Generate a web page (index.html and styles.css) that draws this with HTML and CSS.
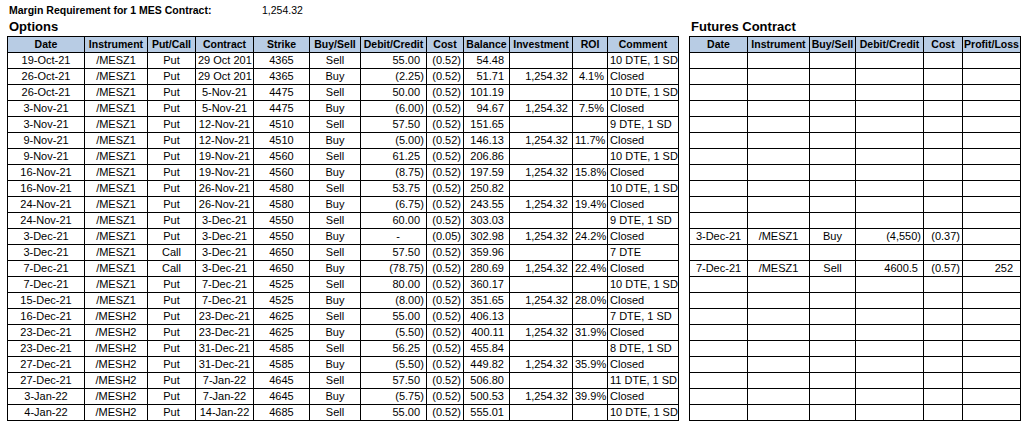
FILE: index.html
```html
<!DOCTYPE html>
<html>
<head>
<meta charset="utf-8">
<link rel="stylesheet" href="styles.css">
</head>
<body>
<div class="page">
  <section class="sheet">
    <div class="topline"><span class="label">Margin Requirement for 1 MES Contract:</span><span class="value">1,254.32</span></div>
    <h2 class="title">Options</h2>
    <table class="grid opt">
      <colgroup>
        <col class="w77"><col class="w63"><col class="w48"><col class="w58"><col class="w56"><col class="w51"><col class="w66"><col class="w37"><col class="w46"><col class="w63"><col class="w35"><col class="w71">
      </colgroup>
      <thead>
        <tr><th>Date</th><th>Instrument</th><th>Put/Call</th><th>Contract</th><th>Strike</th><th>Buy/Sell</th><th>Debit/Credit</th><th>Cost</th><th>Balance</th><th>Investment</th><th>ROI</th><th>Comment</th></tr>
      </thead>
      <tbody>
        <tr><td>19-Oct-21</td><td>/MESZ1</td><td>Put</td><td>29 Oct 201</td><td>4365</td><td>Sell</td><td>55.00</td><td>(0.52)</td><td>54.48</td><td></td><td></td><td>10 DTE, 1 SD</td></tr>
        <tr><td>26-Oct-21</td><td>/MESZ1</td><td>Put</td><td>29 Oct 201</td><td>4365</td><td>Buy</td><td class="n">(2.25)</td><td>(0.52)</td><td>51.71</td><td>1,254.32</td><td>4.1%</td><td>Closed</td></tr>
        <tr><td>26-Oct-21</td><td>/MESZ1</td><td>Put</td><td>5-Nov-21</td><td>4475</td><td>Sell</td><td>50.00</td><td>(0.52)</td><td>101.19</td><td></td><td></td><td>10 DTE, 1 SD</td></tr>
        <tr><td>3-Nov-21</td><td>/MESZ1</td><td>Put</td><td>5-Nov-21</td><td>4475</td><td>Buy</td><td class="n">(6.00)</td><td>(0.52)</td><td>94.67</td><td>1,254.32</td><td>7.5%</td><td>Closed</td></tr>
        <tr><td>3-Nov-21</td><td>/MESZ1</td><td>Put</td><td>12-Nov-21</td><td>4510</td><td>Sell</td><td>57.50</td><td>(0.52)</td><td>151.65</td><td></td><td></td><td>9 DTE, 1 SD</td></tr>
        <tr><td>9-Nov-21</td><td>/MESZ1</td><td>Put</td><td>12-Nov-21</td><td>4510</td><td>Buy</td><td class="n">(5.00)</td><td>(0.52)</td><td>146.13</td><td>1,254.32</td><td>11.7%</td><td>Closed</td></tr>
        <tr><td>9-Nov-21</td><td>/MESZ1</td><td>Put</td><td>19-Nov-21</td><td>4560</td><td>Sell</td><td>61.25</td><td>(0.52)</td><td>206.86</td><td></td><td></td><td>10 DTE, 1 SD</td></tr>
        <tr><td>16-Nov-21</td><td>/MESZ1</td><td>Put</td><td>19-Nov-21</td><td>4560</td><td>Buy</td><td class="n">(8.75)</td><td>(0.52)</td><td>197.59</td><td>1,254.32</td><td>15.8%</td><td>Closed</td></tr>
        <tr><td>16-Nov-21</td><td>/MESZ1</td><td>Put</td><td>26-Nov-21</td><td>4580</td><td>Sell</td><td>53.75</td><td>(0.52)</td><td>250.82</td><td></td><td></td><td>10 DTE, 1 SD</td></tr>
        <tr><td>24-Nov-21</td><td>/MESZ1</td><td>Put</td><td>26-Nov-21</td><td>4580</td><td>Buy</td><td class="n">(6.75)</td><td>(0.52)</td><td>243.55</td><td>1,254.32</td><td>19.4%</td><td>Closed</td></tr>
        <tr><td>24-Nov-21</td><td>/MESZ1</td><td>Put</td><td>3-Dec-21</td><td>4550</td><td>Sell</td><td>60.00</td><td>(0.52)</td><td>303.03</td><td></td><td></td><td>9 DTE, 1 SD</td></tr>
        <tr><td>3-Dec-21</td><td>/MESZ1</td><td>Put</td><td>3-Dec-21</td><td>4550</td><td>Buy</td><td class="z">-</td><td>(0.05)</td><td>302.98</td><td>1,254.32</td><td>24.2%</td><td>Closed</td></tr>
        <tr><td>3-Dec-21</td><td>/MESZ1</td><td>Call</td><td>3-Dec-21</td><td>4650</td><td>Sell</td><td>57.50</td><td>(0.52)</td><td>359.96</td><td></td><td></td><td>7 DTE</td></tr>
        <tr><td>7-Dec-21</td><td>/MESZ1</td><td>Call</td><td>3-Dec-21</td><td>4650</td><td>Buy</td><td class="n">(78.75)</td><td>(0.52)</td><td>280.69</td><td>1,254.32</td><td>22.4%</td><td>Closed</td></tr>
        <tr><td>7-Dec-21</td><td>/MESZ1</td><td>Put</td><td>7-Dec-21</td><td>4525</td><td>Sell</td><td>80.00</td><td>(0.52)</td><td>360.17</td><td></td><td></td><td>10 DTE, 1 SD</td></tr>
        <tr><td>15-Dec-21</td><td>/MESZ1</td><td>Put</td><td>7-Dec-21</td><td>4525</td><td>Buy</td><td class="n">(8.00)</td><td>(0.52)</td><td>351.65</td><td>1,254.32</td><td>28.0%</td><td>Closed</td></tr>
        <tr><td>16-Dec-21</td><td>/MESH2</td><td>Put</td><td>23-Dec-21</td><td>4625</td><td>Sell</td><td>55.00</td><td>(0.52)</td><td>406.13</td><td></td><td></td><td>7 DTE, 1 SD</td></tr>
        <tr><td>23-Dec-21</td><td>/MESH2</td><td>Put</td><td>23-Dec-21</td><td>4625</td><td>Buy</td><td class="n">(5.50)</td><td>(0.52)</td><td>400.11</td><td>1,254.32</td><td>31.9%</td><td>Closed</td></tr>
        <tr><td>23-Dec-21</td><td>/MESH2</td><td>Put</td><td>31-Dec-21</td><td>4585</td><td>Sell</td><td>56.25</td><td>(0.52)</td><td>455.84</td><td></td><td></td><td>8 DTE, 1 SD</td></tr>
        <tr><td>27-Dec-21</td><td>/MESH2</td><td>Put</td><td>31-Dec-21</td><td>4585</td><td>Buy</td><td class="n">(5.50)</td><td>(0.52)</td><td>449.82</td><td>1,254.32</td><td>35.9%</td><td>Closed</td></tr>
        <tr><td>27-Dec-21</td><td>/MESH2</td><td>Put</td><td>7-Jan-22</td><td>4645</td><td>Sell</td><td>57.50</td><td>(0.52)</td><td>506.80</td><td></td><td></td><td>11 DTE, 1 SD</td></tr>
        <tr><td>3-Jan-22</td><td>/MESH2</td><td>Put</td><td>7-Jan-22</td><td>4645</td><td>Buy</td><td class="n">(5.75)</td><td>(0.52)</td><td>500.53</td><td>1,254.32</td><td>39.9%</td><td>Closed</td></tr>
        <tr><td>4-Jan-22</td><td>/MESH2</td><td>Put</td><td>14-Jan-22</td><td>4685</td><td>Sell</td><td>55.00</td><td>(0.52)</td><td>555.01</td><td></td><td></td><td>10 DTE, 1 SD</td></tr>
      </tbody>
    </table>
  </section>
  <section class="sheet">
    <h2 class="title">Futures Contract</h2>
    <table class="grid fut">
      <colgroup>
        <col class="w58"><col class="w62"><col class="w46"><col class="w68"><col class="w39"><col class="w58">
      </colgroup>
      <thead>
        <tr><th>Date</th><th>Instrument</th><th>Buy/Sell</th><th>Debit/Credit</th><th>Cost</th><th>Profit/Loss</th></tr>
      </thead>
      <tbody>
        <tr><td></td><td></td><td></td><td></td><td></td><td></td></tr>
        <tr><td></td><td></td><td></td><td></td><td></td><td></td></tr>
        <tr><td></td><td></td><td></td><td></td><td></td><td></td></tr>
        <tr><td></td><td></td><td></td><td></td><td></td><td></td></tr>
        <tr><td></td><td></td><td></td><td></td><td></td><td></td></tr>
        <tr><td></td><td></td><td></td><td></td><td></td><td></td></tr>
        <tr><td></td><td></td><td></td><td></td><td></td><td></td></tr>
        <tr><td></td><td></td><td></td><td></td><td></td><td></td></tr>
        <tr><td></td><td></td><td></td><td></td><td></td><td></td></tr>
        <tr><td></td><td></td><td></td><td></td><td></td><td></td></tr>
        <tr><td></td><td></td><td></td><td></td><td></td><td></td></tr>
        <tr><td>3-Dec-21</td><td>/MESZ1</td><td>Buy</td><td class="n">(4,550)</td><td>(0.37)</td><td></td></tr>
        <tr><td></td><td></td><td></td><td></td><td></td><td></td></tr>
        <tr><td>7-Dec-21</td><td>/MESZ1</td><td>Sell</td><td>4600.5</td><td>(0.57)</td><td>252</td></tr>
        <tr><td></td><td></td><td></td><td></td><td></td><td></td></tr>
        <tr><td></td><td></td><td></td><td></td><td></td><td></td></tr>
        <tr><td></td><td></td><td></td><td></td><td></td><td></td></tr>
        <tr><td></td><td></td><td></td><td></td><td></td><td></td></tr>
        <tr><td></td><td></td><td></td><td></td><td></td><td></td></tr>
        <tr><td></td><td></td><td></td><td></td><td></td><td></td></tr>
        <tr><td></td><td></td><td></td><td></td><td></td><td></td></tr>
        <tr><td></td><td></td><td></td><td></td><td></td><td></td></tr>
        <tr><td></td><td></td><td></td><td></td><td></td><td></td></tr>
      </tbody>
    </table>
  </section>
</div>
</body>
</html>
```
FILE: styles.css
```css
body {
  margin: 0;
  background: #fff;
  color: #000;
  font-family: "Liberation Sans", Arial, sans-serif;
}

.page {
  display: flex;
  align-items: flex-end;
  gap: 10px;
  padding: 3px 0 0 7px;
}

.sheet {
  display: flex;
  flex-direction: column;
}

.topline {
  display: flex;
  height: 15px;
  line-height: 15px;
  font-size: 10.5px;
}

.topline .label {
  width: 253px;
  padding-left: 2px;
  font-weight: bold;
}

.title {
  margin: 0;
  height: 18px;
  line-height: 18px;
  padding-left: 2px;
  font-size: 13px;
  font-weight: bold;
}

.grid {
  border-collapse: collapse;
  table-layout: fixed;
  font-size: 11px;
}

.opt { width: 671px; }
.fut { width: 331px; }

.w35 { width: 35px; }
.w37 { width: 37px; }
.w39 { width: 39px; }
.w46 { width: 46px; }
.w48 { width: 48px; }
.w51 { width: 51px; }
.w56 { width: 56px; }
.w58 { width: 58px; }
.w62 { width: 62px; }
.w63 { width: 63px; }
.w66 { width: 66px; }
.w68 { width: 68px; }
.w71 { width: 71px; }
.w77 { width: 77px; }

.grid th,
.grid td {
  border: 1px solid #000;
  height: 15px;
  line-height: 15px;
  padding: 0 2px;
  white-space: nowrap;
  overflow: hidden;
}

.grid th {
  background: #b8cce4;
  font-size: 10.5px;
  font-weight: bold;
  text-align: center;
  padding: 0 1px;
}

/* options columns */
.opt td { text-align: center; }
.opt td:nth-child(7) { text-align: right; padding-right: 6px; }
.opt td:nth-child(8) { text-align: right; padding-right: 2px; }
.opt td:nth-child(9) { text-align: right; padding-right: 5px; }
.opt td:nth-child(10) { text-align: right; padding-right: 4px; }
.opt td:nth-child(11) { text-align: right; padding-right: 3px; }
.opt td:nth-child(12) { text-align: left; padding-left: 2px; }

/* futures columns */
.fut td { text-align: center; }
.fut td:nth-child(4) { text-align: right; padding-right: 5px; }
.fut td:nth-child(5) { text-align: right; padding-right: 2px; }
.fut td:nth-child(6) { text-align: right; padding-right: 7px; }

.grid td.n { padding-right: 2px; }
.grid td.z { padding-right: 26px; }
```
